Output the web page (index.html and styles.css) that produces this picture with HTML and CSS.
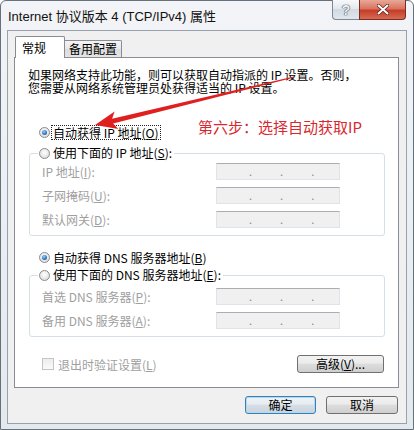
FILE: index.html
```html
<!DOCTYPE html>
<html>
<head>
<meta charset="utf-8">
<link rel="stylesheet" href="styles.css">
</head>
<body>
<div class="window">
  <svg class="arrow" width="414" height="430" viewBox="0 0 414 430">
    <polygon points="95,125 114.6,111.5 112.1,118.8 293.9,76.4 294.1,77.6 113.1,123.6 118.4,129.1" fill="#e0201f"/>
  </svg>
  <div class="note">第六步：选择自动获取IP</div>
  <div class="titlebar">
    <div class="title">Internet 协议版本 4 (TCP/IPv4) 属性</div>
    <div class="caption">
      <div class="cbtn help">?</div>
      <div class="cbtn close">
        <svg width="12" height="11" viewBox="0 0 12 11">
          <path d="M1.5 1.5 L10.5 9.5 M10.5 1.5 L1.5 9.5" stroke="#5a1f18" stroke-width="3.4" stroke-linecap="round"/>
          <path d="M1.5 1.5 L10.5 9.5 M10.5 1.5 L1.5 9.5" stroke="#ffffff" stroke-width="2" stroke-linecap="round"/>
        </svg>
      </div>
    </div>
  </div>
  <div class="client">
    <div class="tabs">
      <div class="tab active">常规</div>
      <div class="tab inactive">备用配置</div>
    </div>
    <div class="panel">
      <p class="desc">如果网络支持此功能，则可以获取自动指派的 IP 设置。否则，<br>您需要从网络系统管理员处获得适当的 IP 设置。</p>
      <div class="opt first"><span class="radio checked"></span><span class="focus">自动获得 IP 地址(<u>O</u>)</span></div>
      <fieldset class="group ip">
        <legend><span class="opt-in"><span class="radio"></span><span>使用下面的 IP 地址(<u>S</u>):</span></span></legend>
        <div class="fields">
          <div class="field"><span class="lbl">IP 地址(<u>I</u>):</span><span class="ipbox"><i>.</i><i>.</i><i>.</i></span></div>
          <div class="field"><span class="lbl">子网掩码(<u>U</u>):</span><span class="ipbox"><i>.</i><i>.</i><i>.</i></span></div>
          <div class="field"><span class="lbl">默认网关(<u>D</u>):</span><span class="ipbox"><i>.</i><i>.</i><i>.</i></span></div>
        </div>
      </fieldset>
      <div class="opt dns-opt"><span class="radio checked"></span><span class="plain">自动获得 DNS 服务器地址(<u>B</u>)</span></div>
      <fieldset class="group dns">
        <legend><span class="opt-in"><span class="radio"></span><span>使用下面的 DNS 服务器地址(<u>E</u>):</span></span></legend>
        <div class="fields">
          <div class="field"><span class="lbl">首选 DNS 服务器(<u>P</u>):</span><span class="ipbox"><i>.</i><i>.</i><i>.</i></span></div>
          <div class="field"><span class="lbl">备用 DNS 服务器(<u>A</u>):</span><span class="ipbox"><i>.</i><i>.</i><i>.</i></span></div>
        </div>
      </fieldset>
      <div class="bottom">
        <div class="chk"><span class="box"></span><span>退出时验证设置(<u>L</u>)</span></div>
        <button class="btn adv">高级(<u>V</u>)...</button>
      </div>
    </div>
    <div class="actions">
      <button class="btn ok">确定</button>
      <button class="btn cancel">取消</button>
    </div>
  </div>
</div>
</body>
</html>
```

FILE: styles.css
```css
* { box-sizing: border-box; }
html, body { margin: 0; padding: 0; }
body {
  width: 414px;
  height: 430px;
  overflow: hidden;
  background: #ffffff;
  font-family: "Noto Sans CJK SC", "Liberation Sans", sans-serif;
  font-size: 12px;
  color: #000;
}
u { text-decoration: underline; }

.window {
  position: relative;
  width: 414px;
  height: 430px;
  border: 1px solid #66717e;
  border-radius: 6px 6px 0 0;
  background: linear-gradient(#f2f4f7, #e4e9ee);
  padding: 0 6px 5px;
  display: flex;
  flex-direction: column;
}

.arrow {
  position: absolute;
  left: -1px;
  top: -1px;
  z-index: 5;
  pointer-events: none;
}
.note {
  position: absolute;
  left: 197px;
  top: 116px;
  z-index: 5;
  font-size: 15px;
  line-height: 20px;
  color: #d8282f;
  white-space: nowrap;
}

.titlebar {
  height: 29px;
  display: flex;
  align-items: center;
  justify-content: space-between;
}
.title {
  padding-left: 1px;
  font-family: "Liberation Sans", "Noto Sans CJK SC", sans-serif;
  font-size: 13px;
  color: #111;
}
.caption {
  align-self: flex-start;
  margin-top: -1px;
  margin-right: 1px;
  display: flex;
}
.cbtn {
  height: 20px;
  display: flex;
  align-items: center;
  justify-content: center;
}
.help {
  width: 27px;
  border: 1px solid #7d8896;
  border-top: none;
  border-right: none;
  border-radius: 0 0 0 4px;
  background: linear-gradient(#f7f9fb, #e2e7ed 50%, #d2d9e1 50%, #e1e6ec);
  font-family: "Liberation Sans", sans-serif;
  font-weight: bold;
  font-size: 14px;
  color: #eef2f6;
  text-shadow: 0 0 1px #3f4d5d, 0 0 1px #3f4d5d, 0 0 1px #3f4d5d;
}
.close {
  width: 47px;
  border: 1px solid #7b2d24;
  border-top: none;
  border-radius: 0 0 4px 0;
  background: linear-gradient(#e8a897, #da7461 45%, #c73d27 55%, #d56a53);
}

.client {
  flex: 1;
  border: 1px solid #98a2ae;
  background: #f0f0f0;
  display: flex;
  flex-direction: column;
}
.tabs {
  display: flex;
  align-items: flex-end;
  padding: 5px 0 0 7px;
}
.tab {
  font-size: 12px;
  line-height: 16px;
  border: 1px solid #898c95;
  border-bottom: none;
}
.tab.active {
  width: 50px;
  height: 22px;
  margin-bottom: -1px;
  background: #fff;
  padding: 3px 0 0 6px;
  border-radius: 2px 2px 0 0;
  position: relative;
  z-index: 1;
}
.tab.inactive {
  width: 57px;
  height: 17px;
  padding-left: 4px;
  border-left: none;
  border-radius: 0 2px 0 0;
  background: linear-gradient(#f4f4f4, #e9e9e9 50%, #dcdcdc 50%, #e4e4e4);
}

.panel {
  margin: 0 7px 0 6px;
  border: 1px solid #898c95;
  background: #fff;
  padding: 10px 13px 14px 13px;
}
.desc {
  margin: 0;
  line-height: 13px;
  white-space: nowrap;
}
.opt {
  display: flex;
  align-items: center;
  height: 18px;
  margin-left: 11px;
  gap: 2px;
}
.opt.first { margin-top: 29px; }
.opt.dns-opt { margin-top: 12px; }
.plain { padding-left: 1px; }
.radio {
  position: relative;
  flex: none;
  width: 11px;
  height: 11px;
  border-radius: 50%;
  border: 1px solid #8b8b8b;
  background: radial-gradient(circle at 50% 40%, #ffffff, #e6e6e6 60%, #cfcfcf);
}
.radio.checked::after {
  content: "";
  position: absolute;
  left: 2px;
  top: 2px;
  width: 5px;
  height: 5px;
  border-radius: 50%;
  background: radial-gradient(circle at 40% 35%, #9ad0f7, #2a6fc0 60%, #164a8c);
}
.focus {
  outline: 1px dotted #222;
  padding: 0 1px;
  line-height: 13px;
}

fieldset.group {
  margin: 3px 0 0 1px;
  padding: 0;
  border: 1px solid #d5dfe5;
  border-radius: 3px;
  min-width: 0;
}
fieldset.dns { margin-top: 0; }
legend {
  margin-left: 8px;
  padding: 0 2px 0 1px;
  height: 18px;
  line-height: 18px;
}
.opt-in {
  display: flex;
  align-items: center;
  gap: 3px;
  height: 18px;
}
.fields {
  padding: 1px 0 7px 12px;
  display: flex;
  flex-direction: column;
  gap: 7px;
}
.dns .fields { padding-top: 4px; }
.field {
  display: flex;
  align-items: center;
  height: 17px;
}
.lbl {
  width: 174px;
  color: #a0a0a0;
}
.ipbox {
  width: 124px;
  height: 17px;
  border: 1px solid #e2e3ea;
  border-top-color: #abadb3;
  background: #f0f0f0;
  display: flex;
  padding-left: 32px;
  gap: 28px;
  color: #8a8a8a;
  font-size: 11px;
  line-height: 15px;
}
.ipbox i { font-style: normal; }

.bottom {
  display: flex;
  align-items: center;
  justify-content: space-between;
  margin-top: 18px;
  height: 18px;
}
.chk {
  display: flex;
  align-items: center;
  gap: 4px;
  margin-left: 14px;
  color: #a0a0a0;
}
.box {
  width: 12px;
  height: 12px;
  border: 1px solid #c4c4c4;
  background: linear-gradient(#ededed, #fafafa);
}
.btn {
  font-family: "Noto Sans CJK SC", "Liberation Sans", sans-serif;
  font-size: 12px;
  height: 18px;
  padding: 0;
  line-height: 16px;
  color: #000;
  border: 1px solid #707070;
  border-radius: 3px;
  background: linear-gradient(#f2f2f2, #ebebeb 45%, #dddddd 50%, #cfcfcf);
}
.adv { width: 87px; margin-right: 1px; }
.actions {
  display: flex;
  justify-content: flex-end;
  gap: 10px;
  padding-right: 8px;
  margin-top: 8px;
}
.ok {
  width: 71px;
  border-color: #3c7fb1;
  box-shadow: inset 0 0 0 1px #aedaf3;
  background: linear-gradient(#eef3f7, #e6ecf1 45%, #d6dee5 50%, #cad4dd);
}
.cancel { width: 72px; }
```
